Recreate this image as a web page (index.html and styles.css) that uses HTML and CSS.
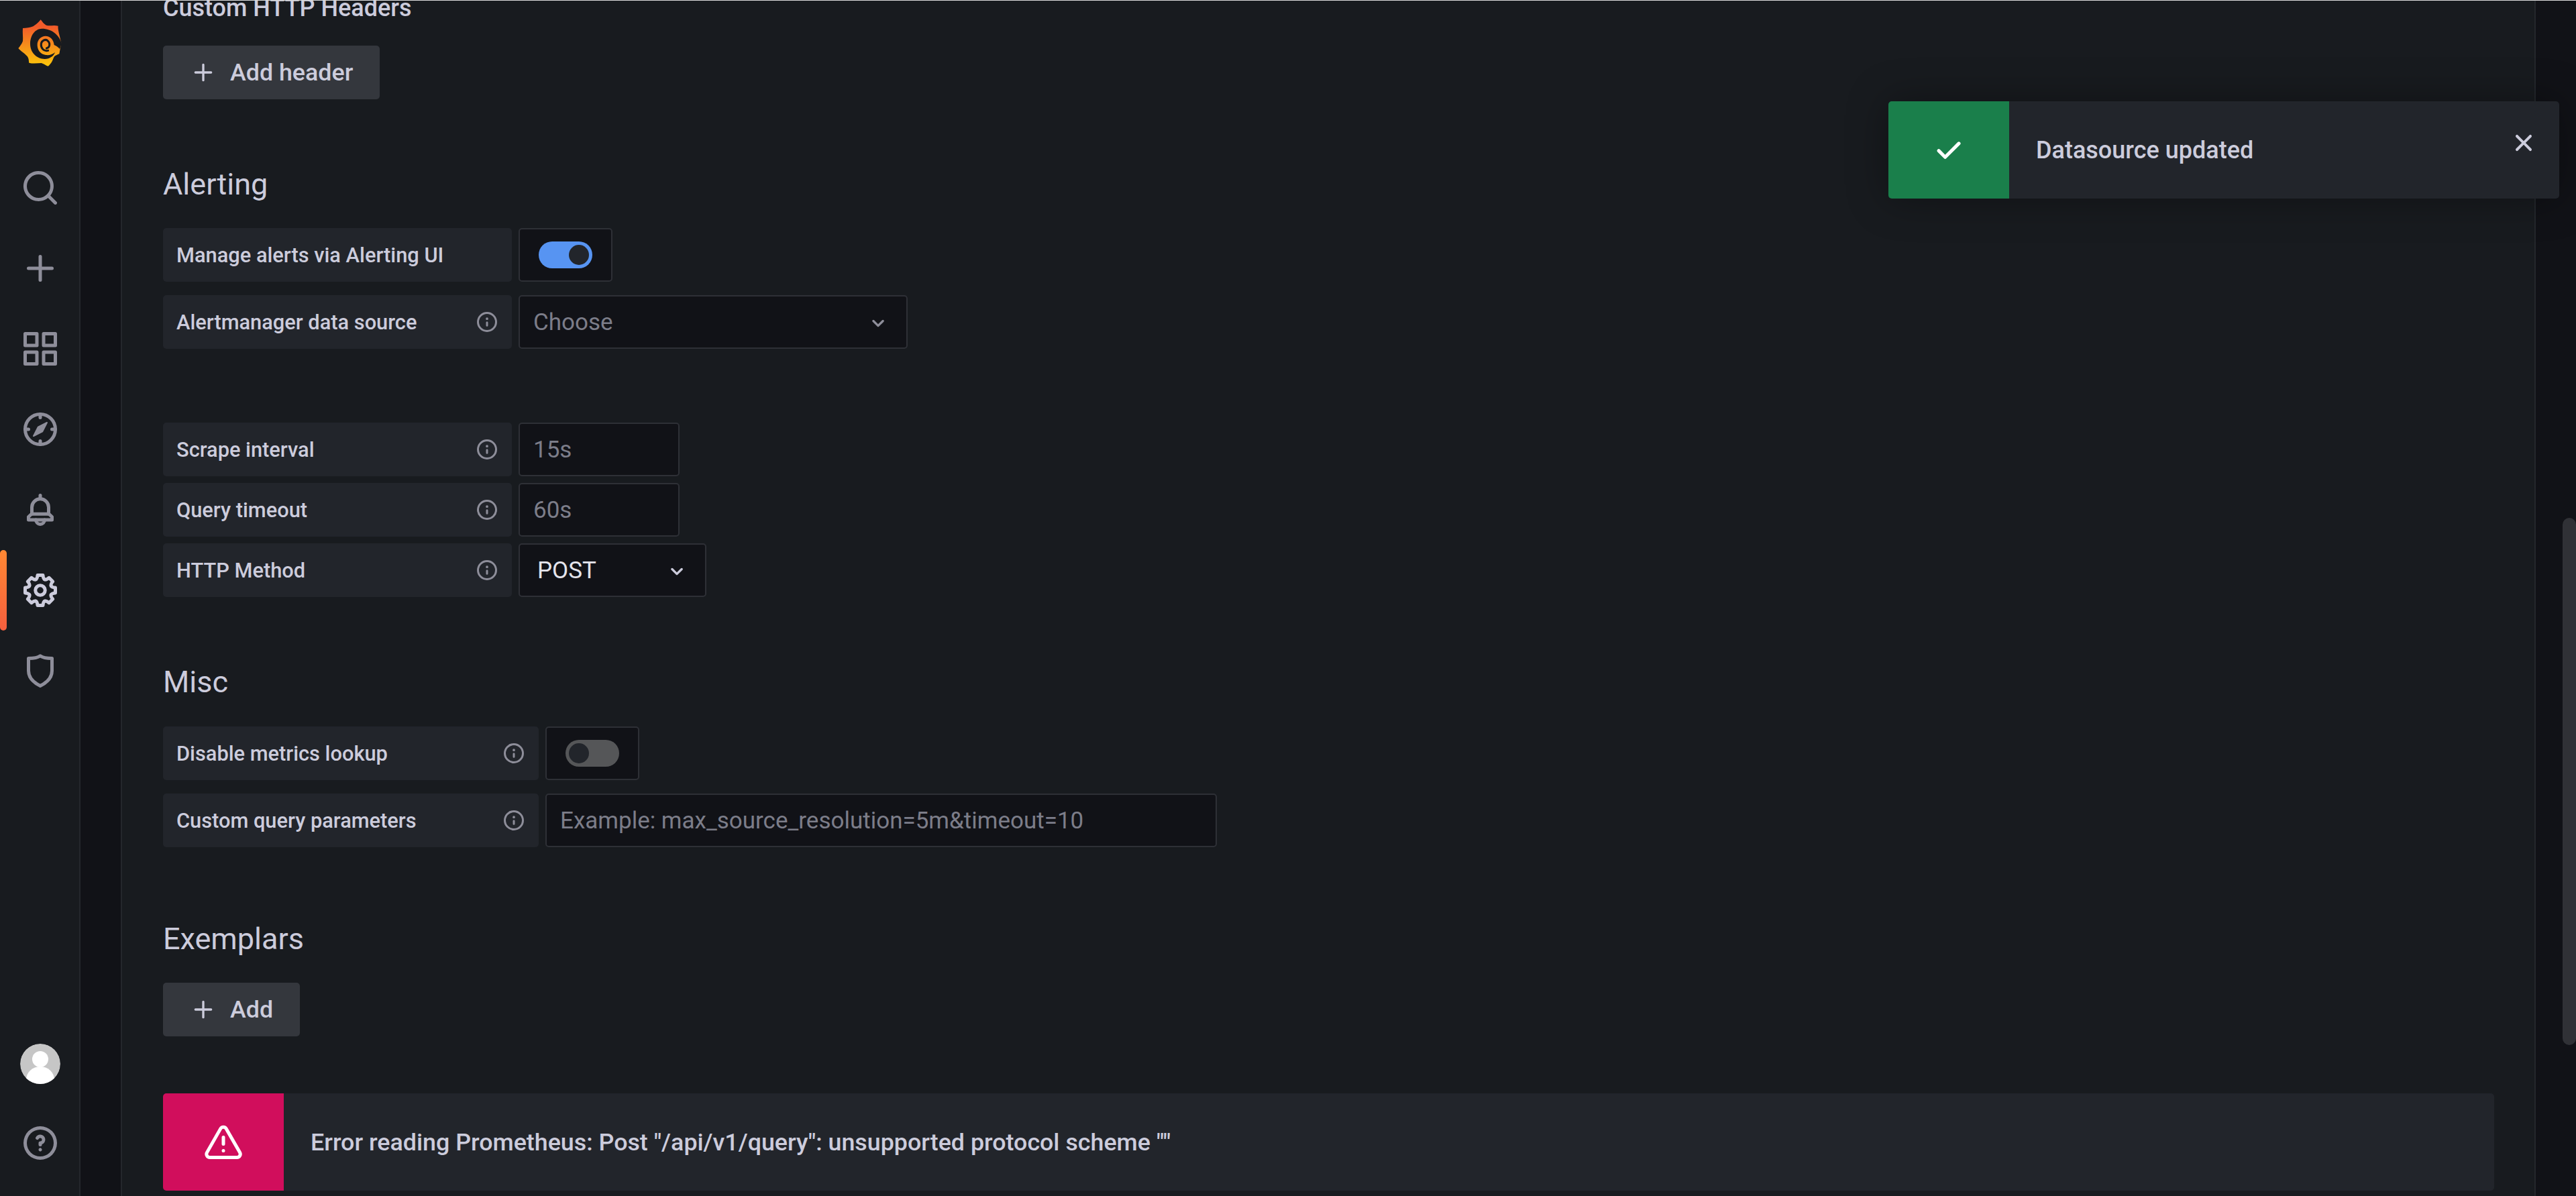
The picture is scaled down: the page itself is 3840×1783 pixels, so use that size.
FILE: index.html
```html
<!doctype html>
<html lang="en">

<head>
  <meta charset="utf-8" />
  <title>Data source settings</title>
  <link rel="stylesheet" href="styles.css">
</head>

<body>
  <svg class="icon-defs" width="0" height="0">
    <defs>
      <symbol id="i-plus" viewBox="0 0 24 24"><path d="M19,11H13V5a1,1,0,0,0-2,0v6H5a1,1,0,0,0,0,2h6v6a1,1,0,0,0,2,0V13h6a1,1,0,0,0,0-2Z"/></symbol>
      <symbol id="i-info" viewBox="0 0 24 24"><path d="M12,2A10,10,0,1,0,22,12,10,10,0,0,0,12,2Zm0,18a8,8,0,1,1,8-8A8,8,0,0,1,12,20Zm0-8.5a1,1,0,0,0-1,1v3a1,1,0,0,0,2,0v-3A1,1,0,0,0,12,11.5Zm0-4a1.25,1.25,0,1,0,1.25,1.25A1.25,1.25,0,0,0,12,7.5Z"/></symbol>
      <symbol id="i-down" viewBox="0 0 24 24"><path d="M17,9.17a1,1,0,0,0-1.41,0L12,12.71,8.46,9.17a1,1,0,0,0-1.41,0,1,1,0,0,0,0,1.42l4.24,4.24a1,1,0,0,0,1.42,0L17,10.59A1,1,0,0,0,17,9.17Z"/></symbol>
      <path id="cog-tooth" d="M9.32 5.53Q10.2 5.2 10.4 3H13.6Q13.8 5.2 14.68 5.53"/>
      <linearGradient id="logo-fill" x1="0" y1="0" x2="0" y2="1">
        <stop offset="0.15" stop-color="#f15b2a"/>
        <stop offset="1" stop-color="#fcc70a"/>
      </linearGradient>
    </defs>
  </svg>

  <div class="app">
    <nav class="sidebar">
      <div class="logo">
        <svg viewBox="0 0 240 240" width="80" height="80">
          <path fill="url(#logo-fill)" d="M88 52C100 45 112 35 122 22C130 32 138 45 150 48C165 50 185 45 200 50C198 65 205 85 214 126L205 175C195 180 185 182 180 192C175 205 170 218 155 230C145 228 135 218 125 216C108 216 90 220 70 215C68 205 70 195 60 184C50 172 35 165 22 150C30 140 38 130 42 118C44 100 40 80 42 60C58 60 74 58 88 52Z"/>
          <path fill="#181b1f" d="M216 128C205 90 170 62 128 62C95 62 75 95 75 130C75 170 105 198 140 198C162 198 180 185 186 168C175 178 160 182 145 180C120 178 105 155 107 130C109 110 125 95 143 95C165 95 180 112 182 135C190 138 200 145 207 153Z"/>
          <path fill="none" stroke="#181b1f" stroke-width="9" stroke-linecap="round" d="M155 160C135 165 122 148 124 130C126 115 142 108 152 115C165 125 165 145 148 150"/>
        </svg>
      </div>

      <a class="nav-item">
        <svg viewBox="0 0 24 24"><path d="M21.71,20.29,18,16.61A9,9,0,1,0,16.61,18l3.68,3.68a1,1,0,0,0,1.42,0A1,1,0,0,0,21.71,20.29ZM11,18a7,7,0,1,1,7-7A7,7,0,0,1,11,18Z"/></svg>
      </a>
      <a class="nav-item">
        <svg viewBox="0 0 24 24"><use href="#i-plus"/></svg>
      </a>
      <a class="nav-item">
        <svg viewBox="0 0 24 24"><path d="M10,13H3a1,1,0,0,0-1,1v7a1,1,0,0,0,1,1h7a1,1,0,0,0,1-1V14A1,1,0,0,0,10,13ZM9,20H4V15H9ZM21,2H14a1,1,0,0,0-1,1v7a1,1,0,0,0,1,1h7a1,1,0,0,0,1-1V3A1,1,0,0,0,21,2ZM20,9H15V4h5Zm1,4H14a1,1,0,0,0-1,1v7a1,1,0,0,0,1,1h7a1,1,0,0,0,1-1V14A1,1,0,0,0,21,13Zm-1,7H15V15h5ZM10,2H3A1,1,0,0,0,2,3v7a1,1,0,0,0,1,1h7a1,1,0,0,0,1-1V3A1,1,0,0,0,10,2ZM9,9H4V4H9Z"/></svg>
      </a>
      <a class="nav-item">
        <svg viewBox="0 0 24 24">
          <g class="line">
            <circle cx="12" cy="12" r="9"/>
            <path d="M12 3V5M12 19V21M3 12H5M19 12H21"/>
          </g>
          <path class="needle" d="M16 8L13.3 13.3L8 16L10.7 10.7Z"/>
        </svg>
      </a>
      <a class="nav-item">
        <svg viewBox="0 0 24 24">
          <g class="line">
            <path d="M12 3.4V5"/>
            <path d="M7 14.5V10.5a5 5 0 0 1 10 0V14.5"/>
            <path d="M6.8 14.5H17.2L19 16.2V18H5V16.2Z"/>
            <path d="M9.4 18a2.6 2.6 0 0 0 5.2 0"/>
          </g>
        </svg>
      </a>
      <a class="nav-item active">
        <svg viewBox="0 0 24 24">
          <g class="line">
            <use href="#cog-tooth"/>
            <use href="#cog-tooth" transform="rotate(45 12 12)"/>
            <use href="#cog-tooth" transform="rotate(90 12 12)"/>
            <use href="#cog-tooth" transform="rotate(135 12 12)"/>
            <use href="#cog-tooth" transform="rotate(180 12 12)"/>
            <use href="#cog-tooth" transform="rotate(225 12 12)"/>
            <use href="#cog-tooth" transform="rotate(270 12 12)"/>
            <use href="#cog-tooth" transform="rotate(315 12 12)"/>
            <circle cx="12" cy="12" r="2.9"/>
          </g>
        </svg>
      </a>
      <a class="nav-item">
        <svg viewBox="0 0 24 24">
          <path class="line" d="M5 4.6C8 4.6 10.5 4.2 12 3.1C13.5 4.2 16 4.6 19 4.6V12C19 16.2 16 19 12 21C8 19 5 16.2 5 12Z"/>
        </svg>
      </a>

      <div class="sidebar-bottom">
        <a class="nav-item avatar-item">
          <svg class="avatar" viewBox="0 0 60 60">
            <circle cx="30" cy="30" r="30" fill="#c6c6c6"/>
            <circle cx="30" cy="23" r="12" fill="#fff"/>
            <ellipse cx="30" cy="54" rx="21" ry="20" fill="#fff"/>
          </svg>
        </a>
        <a class="nav-item help-item">
          <svg viewBox="0 0 24 24"><path d="M11.29,15.29a1.58,1.58,0,0,0-.12.15.76.76,0,0,0-.09.18.64.64,0,0,0-.06.18,1.36,1.36,0,0,0,0,.2.84.84,0,0,0,.08.38.9.9,0,0,0,.54.54.94.94,0,0,0,.76,0,.9.9,0,0,0,.54-.54A1,1,0,0,0,13,16a1,1,0,0,0-.29-.71A1,1,0,0,0,11.29,15.29ZM12,2A10,10,0,1,0,22,12,10,10,0,0,0,12,2Zm0,18a8,8,0,1,1,8-8A8,8,0,0,1,12,20ZM12,7A3,3,0,0,0,9.4,8.5a1,1,0,1,0,1.73,1A1,1,0,0,1,12,9a1,1,0,0,1,0,2,1,1,0,0,0-1,1v1a1,1,0,0,0,2,0v-.18A3,3,0,0,0,12,7Z"/></svg>
        </a>
      </div>
    </nav>

    <div class="gutter"></div>

    <main class="main">
      <h6 class="sub-title">Custom HTTP Headers</h6>
      <button class="btn btn-header"><svg><use href="#i-plus"/></svg>Add header</button>

      <h3 class="section alerting">Alerting</h3>
      <div class="row">
        <div class="label"><span>Manage alerts via Alerting UI</span></div>
        <div class="switch-box"><span class="switch on"></span></div>
      </div>
      <div class="row row-spaced">
        <div class="label"><span>Alertmanager data source</span><svg class="info"><use href="#i-info"/></svg></div>
        <div class="input select select-wide"><span class="placeholder">Choose</span><svg class="chevron"><use href="#i-down"/></svg></div>
      </div>

      <div class="group">
        <div class="row">
          <div class="label"><span>Scrape interval</span><svg class="info"><use href="#i-info"/></svg></div>
          <div class="input input-short"><span class="placeholder">15s</span></div>
        </div>
        <div class="row">
          <div class="label"><span>Query timeout</span><svg class="info"><use href="#i-info"/></svg></div>
          <div class="input input-short"><span class="placeholder">60s</span></div>
        </div>
        <div class="row">
          <div class="label"><span>HTTP Method</span><svg class="info"><use href="#i-info"/></svg></div>
          <div class="input select select-method"><span class="value">POST</span><svg class="chevron"><use href="#i-down"/></svg></div>
        </div>
      </div>

      <h3 class="section misc">Misc</h3>
      <div class="row row-spaced">
        <div class="label label-wide"><span>Disable metrics lookup</span><svg class="info"><use href="#i-info"/></svg></div>
        <div class="switch-box"><span class="switch"></span></div>
      </div>
      <div class="row">
        <div class="label label-wide"><span>Custom query parameters</span><svg class="info"><use href="#i-info"/></svg></div>
        <div class="input input-long"><span class="placeholder">Example: max_source_resolution=5m&amp;timeout=10</span></div>
      </div>

      <h3 class="section exemplars">Exemplars</h3>
      <button class="btn"><svg><use href="#i-plus"/></svg>Add</button>

      <div class="alert">
        <div class="alert-icon">
          <svg viewBox="0 0 24 24"><path d="M12,16a1,1,0,1,0,1,1A1,1,0,0,0,12,16Zm10.67,1.47-8.05-14a3,3,0,0,0-5.24,0l-8,14A3,3,0,0,0,3.94,22H20.06a3,3,0,0,0,2.61-4.53Zm-1.73,2a1,1,0,0,1-.88.51H3.94a1,1,0,0,1-.88-.51,1,1,0,0,1,0-1l8-14a1,1,0,0,1,1.82,0l8.05,14A1,1,0,0,1,20.94,19.49ZM12,8a1,1,0,0,0-1,1v4a1,1,0,0,0,2,0V9A1,1,0,0,0,12,8Z"/></svg>
        </div>
        <div class="alert-text">Error reading Prometheus: Post "/api/v1/query": unsupported protocol scheme ""</div>
      </div>
    </main>

    <div class="track">
      <div class="thumb"></div>
    </div>
  </div>

  <div class="toast">
    <div class="toast-icon">
      <svg viewBox="0 0 24 24"><path d="M18.71,7.21a1,1,0,0,0-1.42,0L9.84,14.67,6.71,11.53A1,1,0,1,0,5.29,13l3.84,3.84a1,1,0,0,0,1.42,0l8.16-8.16A1,1,0,0,0,18.71,7.21Z"/></svg>
    </div>
    <div class="toast-text">Datasource updated</div>
    <svg class="toast-close" viewBox="0 0 24 24"><path d="M13.41,12l4.3-4.29a1,1,0,1,0-1.42-1.42L12,10.59,7.71,6.29A1,1,0,0,0,6.29,7.71L10.59,12l-4.3,4.29a1,1,0,0,0,0,1.42,1,1,0,0,0,1.42,0L12,13.41l4.29,4.3a1,1,0,0,0,1.42,0,1,1,0,0,0,0-1.42Z"/></svg>
  </div>
</body>

</html>
```

FILE: styles.css
```css
:root {
  --bg: #181b1f;
  --bg-dark: #111217;
  --bg-label: #22252b;
  --line: #24272c;
  --border: #2e3036;
  --text: #ccccdc;
  --muted: #8e8e9a;
}

* {
  box-sizing: border-box;
}

html, body {
  height: 100%;
}

body {
  margin: 0;
  overflow: hidden;
  background: var(--bg);
  color: var(--text);
  font-family: Roboto, "Liberation Sans", sans-serif;
  font-size: 35px;
  border-top: 1px solid #dcdcdc;
  position: relative;
}

.icon-defs {
  position: absolute;
}

.app {
  display: flex;
  height: 100%;
}

/* left nav */
.sidebar {
  width: 120px;
  flex: none;
  display: flex;
  flex-direction: column;
  background: var(--bg);
  border-right: 2px solid var(--line);
  padding-bottom: 19px;
}

.logo {
  height: 219px;
  padding: 21px 0 0 20px;
}

.logo svg {
  display: block;
}

.nav-item {
  height: 120px;
  flex: none;
  display: flex;
  align-items: center;
  justify-content: center;
  position: relative;
  padding-left: 2px;
}

.nav-item svg {
  width: 60px;
  height: 60px;
  fill: var(--muted);
}

.nav-item .line {
  fill: none;
  stroke: var(--muted);
  stroke-width: 2;
  stroke-linejoin: round;
  stroke-linecap: round;
}

.nav-item .needle {
  fill: var(--muted);
  stroke: var(--muted);
  stroke-linejoin: round;
  stroke-width: 0.8;
}

.nav-item.active svg .line {
  stroke: var(--text);
}

.nav-item.active::before {
  content: "";
  position: absolute;
  left: 0;
  top: 0;
  width: 10px;
  height: 100%;
  border-radius: 5px;
  background: linear-gradient(#ff8833, #f55f3e);
}

.sidebar-bottom {
  margin-top: auto;
}

.avatar-item {
  height: 116px;
}

.nav-item .avatar {
  width: 60px;
  height: 60px;
  border-radius: 50%;
}

.gutter {
  width: 60px;
  flex: none;
  background: var(--bg-dark);
}

/* content */
.main {
  width: 3600px;
  flex: none;
  overflow: hidden;
  padding: 0 60px 0 61px;
  border-left: 2px solid var(--line);
  border-right: 2px solid var(--line);
}

.sub-title {
  margin: -9px 0 36px;
  font-size: 36px;
  line-height: 40px;
  font-weight: 500;
}

.section {
  margin: 0;
  font-size: 45px;
  line-height: 60px;
  font-weight: 400;
}

.alerting {
  margin: 97px 0 35px;
}

.misc {
  margin: 97px 0 36px;
}

.exemplars {
  margin: 107px 0 35px;
}

.btn {
  display: flex;
  align-items: center;
  gap: 20px;
  height: 80px;
  padding: 0 40px;
  border: 0;
  border-radius: 5px;
  background: #34373d;
  color: var(--text);
  font: 500 35.8px Roboto, sans-serif;
}

.btn svg {
  width: 40px;
  height: 40px;
  fill: var(--text);
}

.row {
  display: flex;
  gap: 10px;
  margin-bottom: 10px;
}

.row-spaced {
  margin-bottom: 20px;
}

.row:last-child {
  margin-bottom: 0;
}

.alerting + .row {
  margin-bottom: 20px;
}

.group {
  margin-top: 110px;
}

.label {
  width: 520px;
  height: 80px;
  flex: none;
  display: flex;
  align-items: center;
  justify-content: space-between;
  padding: 0 19px 0 20px;
  border-radius: 5px;
  background: var(--bg-label);
  font-size: 30.8px;
  font-weight: 500;
}

.label-wide {
  width: 560px;
}

.info {
  width: 36px;
  height: 36px;
  fill: var(--muted);
}

.input,
.switch-box {
  height: 80px;
  flex: none;
  display: flex;
  align-items: center;
  background: var(--bg-dark);
  border: 2px solid var(--border);
  border-radius: 5px;
}

.input {
  padding: 0 20px;
}

.placeholder {
  color: #7c7d89;
}

.input-short {
  width: 240px;
}

.input-long {
  width: 1001px;
}

.select {
  justify-content: space-between;
}

.select-wide {
  width: 580px;
  padding-right: 22px;
}

.select-method {
  width: 280px;
  padding: 0 22px 0 26px;
}

.value {
  color: #e4e4ec;
}

.chevron {
  width: 40px;
  height: 40px;
  margin-top: 4px;
  fill: var(--muted);
}

.select-method .chevron {
  fill: var(--text);
}

.switch-box {
  width: 140px;
  justify-content: center;
}

.switch {
  width: 80px;
  height: 40px;
  border-radius: 20px;
  background: #555658;
  padding: 5px;
  display: flex;
}

.switch::after {
  content: "";
  width: 30px;
  height: 30px;
  border-radius: 50%;
  background: #22252b;
}

.switch.on {
  background: #5794f2;
  justify-content: flex-end;
}

.alert {
  display: flex;
  height: 145px;
  margin-top: 85px;
  background: var(--bg-label);
  border-radius: 5px;
  overflow: hidden;
}

.alert-icon {
  width: 180px;
  flex: none;
  display: flex;
  align-items: center;
  justify-content: center;
  background: #d10e5c;
}

.alert-icon svg {
  width: 60px;
  height: 60px;
  fill: #fff;
}

.alert-text {
  align-self: center;
  padding-left: 40px;
  font-size: 35.8px;
  font-weight: 500;
}

/* scrollbar column */
.track {
  flex: 1;
  background: var(--bg-dark);
  position: relative;
}

.thumb {
  position: absolute;
  right: 0;
  top: 771px;
  width: 20px;
  height: 786px;
  border-radius: 10px;
  background: #303136;
}

/* notification */
.toast {
  position: absolute;
  top: 150px;
  left: 2815px;
  width: 1000px;
  height: 145px;
  display: flex;
  align-items: center;
  background: var(--bg-label);
  border-radius: 5px;
  overflow: hidden;
  box-shadow: 0 0 60px rgba(0, 0, 0, 0.35);
}

.toast-icon {
  width: 180px;
  height: 100%;
  flex: none;
  display: flex;
  align-items: center;
  justify-content: center;
  background: #1a7f4b;
}

.toast-icon svg {
  width: 60px;
  height: 60px;
  fill: #fff;
}

.toast-text {
  padding-left: 40px;
  font-size: 36px;
  font-weight: 500;
}

.toast-close {
  position: absolute;
  right: 29px;
  top: 38px;
  width: 48px;
  height: 48px;
  fill: var(--text);
}
```
